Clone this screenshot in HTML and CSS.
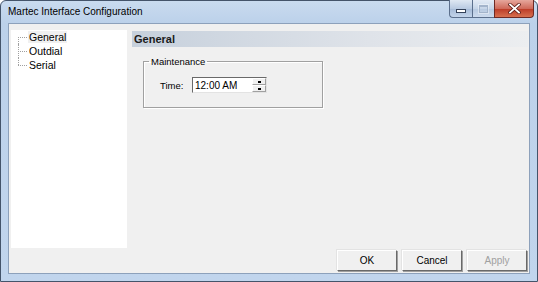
FILE: index.html
```html
<!DOCTYPE html>
<html lang="en">

<head>
    <meta charset="UTF-8">
    <title>Martec Interface Configuration</title>
    <link rel="stylesheet" href="styles.css">
</head>

<body>
    <div class="window">
        <div class="titlebar">
            <span class="title">Martec Interface Configuration</span>
            <div class="caption-buttons">
                <div class="cap-btn cap-min"><span class="min-bar"></span></div>
                <div class="cap-btn cap-max"><span class="max-box"></span></div>
                <div class="cap-btn cap-close">
                    <svg width="13" height="11" viewBox="0 0 13 11">
                        <path d="M2 1.5 L11 9.5 M11 1.5 L2 9.5" stroke="#5a1a14" stroke-width="3.4" stroke-linecap="square"/>
                        <path d="M2 1.5 L11 9.5 M11 1.5 L2 9.5" stroke="#ffffff" stroke-width="1.8" stroke-linecap="square"/>
                    </svg>
                </div>
            </div>
        </div>

        <div class="client">
            <div class="content">
                <ul class="tree">
                    <li class="tree-item first"><span class="label selected">General</span></li>
                    <li class="tree-item"><span class="label">Outdial</span></li>
                    <li class="tree-item last"><span class="label">Serial</span></li>
                </ul>

                <div class="page">
                    <div class="page-header">General</div>
                    <fieldset class="groupbox">
                        <legend>Maintenance</legend>
                        <div class="field-row">
                            <label>Time:</label>
                            <div class="time-picker">
                                <span class="time-text">12:00 AM</span>
                                <div class="spinner">
                                    <div class="spin-btn"><span class="dot"></span></div>
                                    <div class="spin-btn"><span class="dot"></span></div>
                                </div>
                            </div>
                        </div>
                    </fieldset>
                </div>
            </div>

            <div class="buttons">
                <button class="btn">OK</button>
                <button class="btn">Cancel</button>
                <button class="btn disabled">Apply</button>
            </div>
        </div>
    </div>
</body>

</html>
```

FILE: styles.css
```css
* {
    box-sizing: border-box;
    margin: 0;
    padding: 0;
}

body {
    font-family: 'Liberation Sans', Arial, sans-serif;
    background-color: #ffffff;
}

.window {
    width: 538px;
    height: 282px;
    border: 1px solid #44546a;
    border-radius: 6px 6px 0 0;
    background: linear-gradient(to bottom, #c9dbef 0px, #bcd1ea 22px, #c1d5ed 100%);
    padding: 0 6px 7px 6px;
    display: flex;
    flex-direction: column;
}

/* title bar */
.titlebar {
    height: 21px;
    display: flex;
    align-items: flex-start;
}

.title {
    font-family: 'Liberation Sans', Arial, sans-serif;
    font-size: 10px;
    color: #000;
    margin-top: 5px;
    padding-left: 1px;
}

.caption-buttons {
    display: flex;
    margin-left: auto;
    margin-top: -1px;
    margin-right: -3px;
}

.cap-btn {
    height: 18px;
    border: 1px solid #5b6f8c;
    border-top: none;
    display: flex;
    align-items: center;
    justify-content: center;
}

.cap-min {
    width: 23px;
    border-radius: 0 0 0 4px;
    border-right: none;
    background: linear-gradient(to bottom, #dfe8f3, #b9cbe2 50%, #a5bad6 51%, #c3d4ea);
}

.cap-max {
    width: 22px;
    border-right: none;
    background: linear-gradient(to bottom, #e3ebf5, #c6d5e8 50%, #b6c8df 51%, #cddbee);
}

.cap-close {
    width: 40px;
    border-radius: 0 0 4px 0;
    border-color: #6e2a24;
    background: linear-gradient(to bottom, #e6a79c, #cf6a5a 50%, #bb3a26 51%, #d7704f);
}

.min-bar {
    width: 10px;
    height: 4px;
    background: #fff;
    border: 1px solid #34425a;
    margin-top: 4px;
}

.max-box {
    width: 9px;
    height: 8px;
    border: 1px solid #a3b4cb;
    border-top-width: 2px;
    box-shadow: 0 0 0 1px rgba(255, 255, 255, 0.4);
}

/* client area */
.client {
    flex: 1;
    margin: 1px 1px 0 1px;
    background-color: #f0f0f0;
    border: 1px solid #8da1bb;
    display: flex;
    flex-direction: column;
    padding: 6px 1px 0 2px;
}

.content {
    display: flex;
    gap: 5px;
    height: 218px;
}

/* tree */
.tree {
    list-style: none;
    width: 116px;
    background-color: #ffffff;
    padding-top: 0;
    padding-left: 7px;
    font-size: 10.5px;
    color: #000;
}

.tree-item {
    position: relative;
    height: 14px;
    line-height: 14px;
    padding-left: 10px;
}

.tree-item::before {
    content: "";
    position: absolute;
    left: 0;
    top: 7px;
    width: 9px;
    border-top: 1px dotted #a0a0a0;
}

.tree-item::after {
    content: "";
    position: absolute;
    left: 0;
    top: 0;
    height: 14px;
    border-left: 1px dotted #a0a0a0;
}

.tree-item.first::after {
    top: 7px;
    height: 7px;
}

.tree-item.last::after {
    height: 7px;
}

.label {
    padding: 0 1px;
}

.label.selected {
    background-color: #f0f0f0;
}

/* right page */
.page {
    flex: 1;
    display: flex;
    flex-direction: column;
}

.page-header {
    height: 16px;
    margin-top: 1px;
    line-height: 16px;
    padding-left: 2px;
    font-weight: bold;
    font-size: 11px;
    color: #1a1a1a;
    background: linear-gradient(to right, #c6d0dc, #dfe3e9 60%, #eceef0);
}

.groupbox {
    width: 180px;
    height: 52px;
    margin-left: 11px;
    margin-top: 9px;
    border: 1px solid #a0a0a0;
    box-shadow: inset 1px 1px 0 #ffffff, 1px 1px 0 #ffffff;
    padding: 0 0 0 16px;
}

.groupbox legend {
    font-size: 9.5px;
    color: #000;
    margin-left: -11px;
    padding: 0 2px;
}

.field-row {
    display: flex;
    align-items: center;
    margin-top: 10px;
    font-size: 9.5px;
}

.field-row label {
    width: 32px;
}

.time-picker {
    display: flex;
    align-items: center;
    width: 75px;
    height: 16px;
    background: #ffffff;
    border-top: 1px solid #696969;
    border-left: 1px solid #696969;
    border-right: 1px solid #e3e3e3;
    border-bottom: 1px solid #e3e3e3;
    padding-left: 2px;
}

.time-text {
    flex: 1;
    font-size: 10px;
}

.spinner {
    display: flex;
    flex-direction: column;
    width: 14px;
    height: 14px;
}

.spin-btn {
    flex: 1;
    background: #f0f0f0;
    border-top: 1px solid #ffffff;
    border-left: 1px solid #ffffff;
    border-right: 1px solid #a0a0a0;
    border-bottom: 1px solid #a0a0a0;
    display: flex;
    align-items: center;
    justify-content: center;
}

.dot {
    width: 3px;
    height: 2px;
    background: #000;
}

/* buttons */
.buttons {
    display: flex;
    justify-content: flex-end;
    gap: 5px;
    margin-top: 2px;
    padding-right: 1px;
}

.btn {
    width: 60px;
    height: 21px;
    font-family: 'Liberation Sans', Arial, sans-serif;
    font-size: 10px;
    color: #000;
    background-color: #f0f0f0;
    border-top: 1px solid #ffffff;
    border-left: 1px solid #ffffff;
    border-right: 1px solid #696969;
    border-bottom: 1px solid #696969;
    box-shadow: 1px 1px 0 #a0a0a0, -1px -1px 0 #e3e3e3;
}

.btn.disabled {
    color: #a0a0a0;
}
```
